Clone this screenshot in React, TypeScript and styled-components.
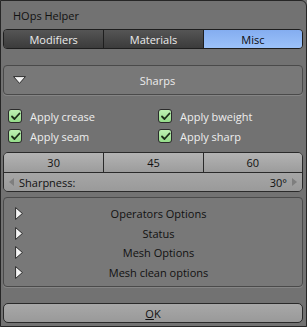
import React from "react";
import styled, { createGlobalStyle } from "styled-components";

const Global = createGlobalStyle`
  html, body { margin: 0; padding: 0; background: #727272; }
  body { font-family: "Open Sans", "Noto Sans", "DejaVu Sans", sans-serif; font-size: 11px; line-height: 1; }
`;

const Window = styled.div`
  box-sizing: border-box;
  width: 307px;
  height: 327px;
  background: #727272;
  border: 1px solid #262626;
  border-top-right-radius: 6px;
  padding: 0 3px 0 2px;
  display: flex;
  flex-direction: column;
`;

const Title = styled.div`
  height: 28px;
  display: flex;
  align-items: center;
  padding-left: 10px;
  color: #111;
  box-sizing: border-box;
`;

const Tabs = styled.div`
  display: grid;
  grid-template-columns: 1fr 1fr 1fr;
  height: 20px;
  border: 1px solid #1e1e1e;
  border-radius: 4px;
  overflow: hidden;
  box-sizing: border-box;
`;

const Tab = styled.div<{ $active?: boolean }>`
  display: flex;
  align-items: center;
  justify-content: center;
  color: ${(p) => (p.$active ? "#0d0d0d" : "#ececec")};
  background: ${(p) =>
    p.$active
      ? "linear-gradient(#84adf0, #9cc2f9)"
      : "linear-gradient(#555555, #3b3b3b)"};
  & + & { border-left: 1px solid #1e1e1e; }
`;

const Panel = styled.div<{ $mt: number; $h: number }>`
  margin-top: ${(p) => p.$mt}px;
  height: ${(p) => p.$h}px;
  box-sizing: border-box;
  border: 1px solid #4a4a4a;
  border-radius: 4px;
  background: #787878;
  box-shadow: 0 1px 0 #858585;
`;

const PanelHeader = styled.div`
  height: 100%;
  display: grid;
  grid-template-columns: 24px 1fr 24px;
  align-items: center;
  padding-left: 9px;
  color: #ececec;
  & > svg { display: block; }
`;

const Center = styled.div`
  text-align: center;
`;

const CheckGrid = styled.div`
  margin-top: 14px;
  display: grid;
  grid-template-columns: 150px 1fr;
  row-gap: 6px;
  padding-left: 5px;
`;

const CheckItem = styled.div`
  display: flex;
  align-items: center;
  gap: 8px;
  height: 14px;
  color: #eeeeee;
`;

const Box = styled.div`
  width: 14px;
  height: 14px;
  box-sizing: border-box;
  border: 1px solid #2b2b2b;
  border-radius: 3px;
  background: linear-gradient(#bdf0b3, #95dc8a);
  display: flex;
  align-items: center;
  justify-content: center;
`;

const NumBlock = styled.div`
  margin-top: 9px;
  border: 1px solid #2a2a2a;
  border-radius: 5px;
  overflow: hidden;
  box-sizing: border-box;
`;

const NumRow = styled.div`
  display: grid;
  grid-template-columns: 1fr 1fr 1fr;
  height: 19px;
  border-bottom: 1px solid #2a2a2a;
`;

const NumCell = styled.div`
  display: flex;
  align-items: center;
  justify-content: center;
  color: #111;
  background: linear-gradient(#b3b3b3, #9c9c9c);
  & + & { border-left: 1px solid #2a2a2a; }
`;

const Slider = styled.div`
  height: 18px;
  display: flex;
  align-items: center;
  padding: 0 5px 0 5px;
  color: #111;
  background: linear-gradient(#a6a6a6, #9a9a9a);
  gap: 5px;
`;

const Grow = styled.div`
  flex: 1;
`;

const OptionsList = styled.div`
  display: flex;
  flex-direction: column;
  padding-top: 6px;
`;

const OptionRow = styled.div`
  height: 19.5px;
  display: grid;
  grid-template-columns: 20px 1fr 20px;
  align-items: center;
  padding-left: 11px;
  color: #111;
  & > svg { display: block; }
`;

const OkButton = styled.div`
  margin-top: 16px;
  height: 20px;
  box-sizing: border-box;
  border: 1px solid #2a2a2a;
  border-radius: 5px;
  background: linear-gradient(#a8a8a8, #999999);
  color: #111;
  display: flex;
  align-items: center;
  justify-content: center;
  & u { text-decoration: underline; }
`;

const DownTri = () => (
  <svg width="13" height="8" viewBox="0 0 13 8">
    <path d="M0.6 0.6 L12.4 0.6 L6.5 7.4 Z" fill="#f4f4f4" stroke="#1e1e1e" strokeWidth="0.9" strokeLinejoin="round" />
  </svg>
);

const RightTri = () => (
  <svg width="8" height="13" viewBox="0 0 8 13">
    <path d="M0.6 0.6 L7.4 6.5 L0.6 12.4 Z" fill="#f4f4f4" stroke="#1e1e1e" strokeWidth="0.9" strokeLinejoin="round" />
  </svg>
);

const Check = () => (
  <svg width="11" height="11" viewBox="0 0 11 11">
    <path d="M2 5.5 L4.5 8 L9.5 2.5" fill="none" stroke="#1c2e1a" strokeWidth="1.8" strokeLinecap="round" strokeLinejoin="round" />
  </svg>
);

const Arrow = ({ dir }: { dir: "l" | "r" }) => (
  <svg width="5" height="8" viewBox="0 0 5 8">
    <path d={dir === "l" ? "M5 0 L0 4 L5 8 Z" : "M0 0 L5 4 L0 8 Z"} fill="#7e7e7e" />
  </svg>
);

const checks = ["Apply crease", "Apply bweight", "Apply seam", "Apply sharp"];
const options = ["Operators Options", "Status", "Mesh Options", "Mesh clean options"];

export default function App() {
  return (
    <>
      <Global />
      <Window>
        <Title>HOps Helper</Title>
        <Tabs>
          <Tab>Modifiers</Tab>
          <Tab>Materials</Tab>
          <Tab $active>Misc</Tab>
        </Tabs>
        <Panel $mt={16} $h={30}>
          <PanelHeader>
            <DownTri />
            <Center>Sharps</Center>
            <span />
          </PanelHeader>
        </Panel>
        <CheckGrid>
          {checks.map((c) => (
            <CheckItem key={c}>
              <Box>
                <Check />
              </Box>
              {c}
            </CheckItem>
          ))}
        </CheckGrid>
        <NumBlock>
          <NumRow>
            <NumCell>30</NumCell>
            <NumCell>45</NumCell>
            <NumCell>60</NumCell>
          </NumRow>
          <Slider>
            <Arrow dir="l" />
            <Grow>Sharpness:</Grow>
            <span>30°</span>
            <Arrow dir="r" />
          </Slider>
        </NumBlock>
        <Panel $mt={5} $h={90}>
          <OptionsList>
            {options.map((o) => (
              <OptionRow key={o}>
                <RightTri />
                <Center>{o}</Center>
                <span />
              </OptionRow>
            ))}
          </OptionsList>
        </Panel>
        <OkButton>
          <span>
            <u>O</u>K
          </span>
        </OkButton>
      </Window>
    </>
  );
}
